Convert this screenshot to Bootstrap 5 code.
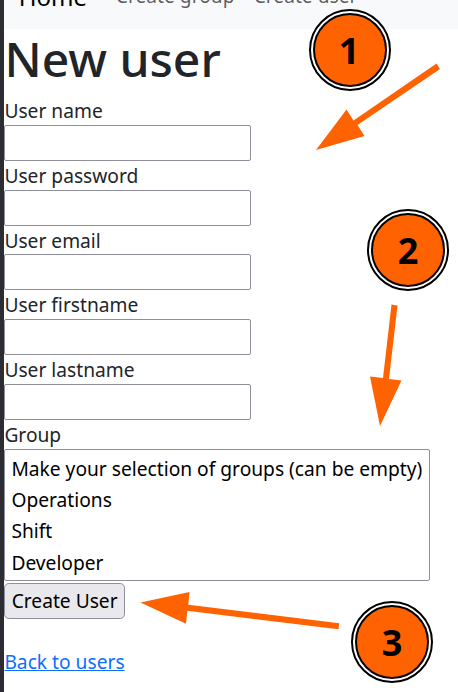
<!DOCTYPE html>
<html lang="en">
<head>
<meta charset="utf-8">
<meta name="viewport" content="width=device-width, initial-scale=1">
<title>New user</title>
<link href="https://cdn.jsdelivr.net/npm/bootstrap@5.3.0/dist/css/bootstrap.min.css" rel="stylesheet">
<style>
html { font-size: 19.2px; }
body { font-family: "Noto Sans", sans-serif; height: 692px; overflow: hidden; }
.page-edge { width: 4.4px; background: linear-gradient(to right, #2b2d32 0 3.6px, #909498 4px 5px); }
.top-nav { margin-top: -38.4px; height: 67.2px; padding-top: 11px; padding-bottom: 8.2px; }
.top-nav .navbar-brand { margin-left: 14.4px; margin-right: 19.2px; }
.page-title { font-size: 48px; line-height: 57.6px; padding-top: 1px; margin-bottom: 8.6px; }
.form-text-label { display: block; height: 28.8px; padding-top: 1px; line-height: 28.8px; }
.field { display: block; width: 246.4px; height: 36px; border: 1.2px solid #8f8f9d; border-radius: 2px; background: #fff; }
.group-list { display: block; width: 425.5px; height: 132px; padding: 4px 0 2.8px; border: 1.2px solid #8f8f9d; border-radius: 2px; background: #fff; color: #000; overflow: hidden; appearance: none; outline: 0; }
.group-list option { height: 31.2px; padding: 1.2px 6px; line-height: 28.8px; }
.submit-btn { display: block; width: 120.5px; height: 36px; margin-top: 1.9px; padding: 0; border: 1.2px solid #8f8f9d; border-radius: 4.8px; background: #e9e9ed; color: #000; line-height: 33px; }
.back-link { margin-top: 29.5px; }
.callouts { pointer-events: none; font-weight: 700; font-size: 36px; }
</style>
</head>
<body class="position-relative bg-white">
<div class="d-flex h-100">
  <div class="page-edge flex-shrink-0"></div>
  <div class="flex-grow-1">
    <nav class="navbar navbar-expand navbar-light bg-light top-nav">
      <a class="navbar-brand" href="#">Home</a>
      <ul class="navbar-nav">
        <li class="nav-item"><a class="nav-link" href="#">Create group</a></li>
        <li class="nav-item"><a class="nav-link" href="#">Create user</a></li>
      </ul>
    </nav>
    <main>
      <h1 class="page-title">New user</h1>
      <form>
        <label class="form-text-label" for="name">User name</label>
        <input class="field" id="name" type="text">
        <label class="form-text-label" for="password">User password</label>
        <input class="field" id="password" type="password">
        <label class="form-text-label" for="email">User email</label>
        <input class="field" id="email" type="email">
        <label class="form-text-label" for="firstname">User firstname</label>
        <input class="field" id="firstname" type="text">
        <label class="form-text-label" for="lastname">User lastname</label>
        <input class="field" id="lastname" type="text">
        <label class="form-text-label" for="groups">Group</label>
        <select class="group-list" id="groups" multiple size="4">
          <option>Make your selection of groups (can be empty)</option>
          <option>Operations</option>
          <option>Shift</option>
          <option>Developer</option>
        </select>
        <button class="submit-btn" type="button">Create User</button>
      </form>
      <div class="back-link"><a href="#">Back to users</a></div>
    </main>
  </div>
</div>
<svg class="callouts position-absolute top-0 start-0" width="458" height="692" viewBox="0 0 458 692">
  <defs>
    <g id="badge-ring">
      <circle r="40" fill="#fff" stroke="#000" stroke-width="2"/>
      <circle r="36" fill="#ff6200" stroke="#000" stroke-width="2"/>
    </g>
  </defs>
  <g fill="#ff6200">
    <path d="M316 150L346.500 109.500L353.500 120.500L436.500 63.500L440 69L357.500 125L364.500 136Z"/>
    <path d="M380 426L370 376.500L383 378L391.500 304.500L397.500 305.500L389 379L401.500 380.500Z"/>
    <path d="M140.500 602.500L189.500 592L188.300 604.700L339.200 623.300L338.500 629.300L187.300 610.800L186 623.800Z"/>
  </g>
  <use href="#badge-ring" x="350" y="50"/>
  <use href="#badge-ring" x="408" y="250"/>
  <use href="#badge-ring" x="392" y="642"/>
  <g text-anchor="middle" fill="#000">
    <text x="349" y="64">1</text>
    <text x="408" y="264">2</text>
    <text x="392" y="656">3</text>
  </g>
</svg>
<script src="https://cdn.jsdelivr.net/npm/bootstrap@5.3.0/dist/js/bootstrap.bundle.min.js"></script>
</body>
</html>
